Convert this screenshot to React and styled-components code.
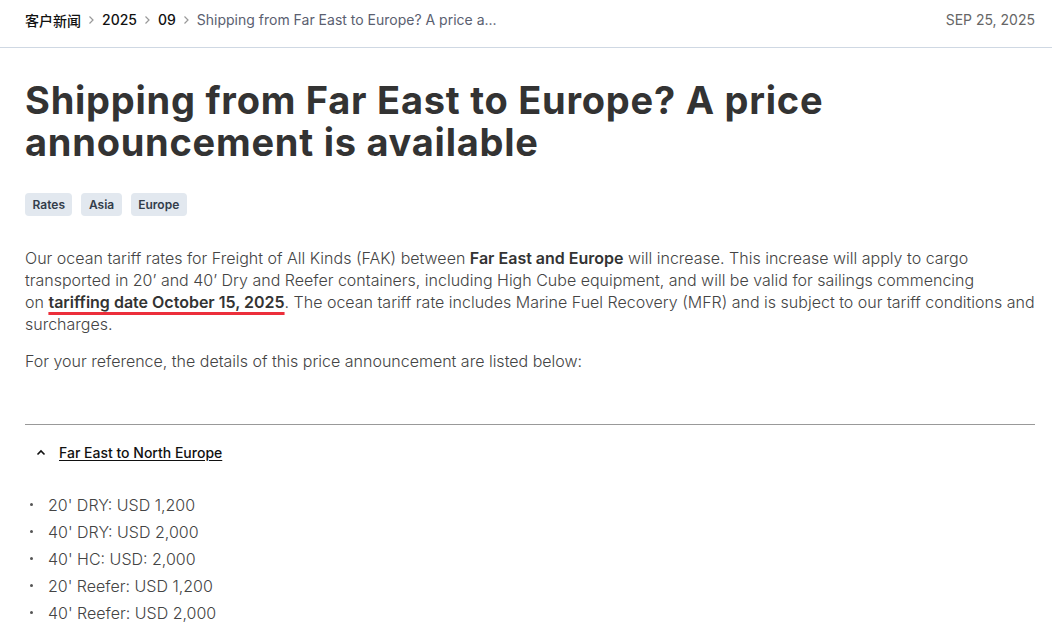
import React from "react";
import styled, { createGlobalStyle } from "styled-components";

const GlobalStyle = createGlobalStyle`
  body {
    margin: 0;
    background: #fff;
    font-family: Inter, "Noto Sans", "Noto Sans CJK SC", sans-serif;
    color: #333;
  }
`;

const Page = styled.div`
  padding: 0 17px 0 25px;
`;

const TopBar = styled.header`
  display: flex;
  align-items: center;
  justify-content: space-between;
  height: 39px;
  margin: 0 -17px 0 -25px;
  padding: 0 17px 8px 25px;
  border-bottom: 1px solid #cfd8e3;
`;

const Crumbs = styled.nav`
  display: flex;
  align-items: center;
  gap: 6px;
  font-size: 14px;
`;

const Crumb = styled.span`
  color: ${(p) => (p.current ? "#5a6070" : "#111")};
  font-weight: ${(p) => (p.current ? 400 : 500)};
  font-family: Inter, "Noto Sans CJK SC", sans-serif;
`;

const Sep = styled.svg`
  width: 9px;
  height: 10px;
  margin-top: 1px;
`;

const DateText = styled.span`
  font-size: 14px;
  color: #666;
`;

const Title = styled.h1`
  margin: 31px 0 0;
  font-size: 38px;
  line-height: 42px;
  font-weight: 700;
  color: #333;
  letter-spacing: 0.75px;
  max-width: 860px;
`;

const Tags = styled.div`
  display: flex;
  gap: 9px;
  margin-top: 30px;
`;

const Tag = styled.span`
  display: inline-flex;
  align-items: center;
  height: 23px;
  padding: 0 7.5px;
  border-radius: 4px;
  background: #e2e8ef;
  color: #333d4b;
  font-size: 12px;
  font-weight: 600;
`;

const Para = styled.p`
  margin: ${(p) => p.top || "0"} 0 0;
  font-size: 16px;
  line-height: 22px;
  font-weight: 300;
  color: #444;
`;

const Strong = styled.strong`
  font-weight: 600;
  color: #333;
`;

const Marked = styled(Strong)`
  text-decoration: underline;
  text-decoration-color: #ec2f3b;
  text-decoration-thickness: 3px;
  text-underline-offset: 4px;
`;

const Divider = styled.hr`
  margin: 52px 0 0;
  border: 0;
  border-top: 1px solid #999;
`;

const AccordionHead = styled.button`
  display: flex;
  align-items: center;
  gap: 13px;
  margin-top: 19px;
  padding: 0 0 0 11px;
  background: none;
  border: 0;
  cursor: pointer;
  font-family: inherit;
`;

const HeadLabel = styled.span`
  font-size: 14px;
  font-weight: 500;
  color: #111;
  text-decoration: underline;
  text-underline-offset: 2px;
`;

const List = styled.ul`
  list-style: none;
  margin: 30px 0 0;
  padding: 0;
`;

const Item = styled.li`
  display: flex;
  align-items: center;
  height: 27px;
  font-size: 16px;
  font-weight: 300;
  color: #444;

  &::before {
    content: "";
    width: 3px;
    height: 3px;
    border-radius: 50%;
    background: #555;
    margin: 0 15px 0 5px;
  }
`;

const Chevron = () => (
  <Sep viewBox="0 0 9 10">
    <path d="M2.5 1.5 L6 5 L2.5 8.5" fill="none" stroke="#999" strokeWidth="1.2" />
  </Sep>
);

const rates = [
  "20' DRY: USD 1,200",
  "40' DRY: USD 2,000",
  "40' HC: USD: 2,000",
  "20' Reefer: USD 1,200",
  "40' Reefer: USD 2,000",
];

export default function App() {
  return (
    <Page>
      <GlobalStyle />
      <TopBar>
        <Crumbs>
          <Crumb>客户新闻</Crumb>
          <Chevron />
          <Crumb>2025</Crumb>
          <Chevron />
          <Crumb>09</Crumb>
          <Chevron />
          <Crumb current>Shipping from Far East to Europe? A price a...</Crumb>
        </Crumbs>
        <DateText>SEP 25, 2025</DateText>
      </TopBar>

      <Title>Shipping from Far East to Europe? A price announcement is available</Title>

      <Tags>
        <Tag>Rates</Tag>
        <Tag>Asia</Tag>
        <Tag>Europe</Tag>
      </Tags>

      <Para top="31px">
        Our ocean tariff rates for Freight of All Kinds (FAK) between <Strong>Far East and Europe</Strong> will
        increase. This increase will apply to cargo transported in 20’ and 40’ Dry and Reefer containers,
        including High Cube equipment, and will be valid for sailings commencing on{"\u00a0"}
        <Marked>tariffing date October 15, 2025</Marked>. The ocean tariff rate includes Marine Fuel Recovery
        (MFR) and is subject to our tariff conditions and surcharges.
      </Para>
      <Para top="15px">For your reference, the details of this price announcement are listed below:</Para>

      <Divider />

      <AccordionHead>
        <svg width="10" height="10" viewBox="0 0 10 10">
          <path d="M1.5 6.5 L5 3 L8.5 6.5" fill="none" stroke="#111" strokeWidth="1.6" />
        </svg>
        <HeadLabel>Far East to North Europe</HeadLabel>
      </AccordionHead>

      <List>
        {rates.map((r) => (
          <Item key={r}>{r}</Item>
        ))}
      </List>
    </Page>
  );
}
